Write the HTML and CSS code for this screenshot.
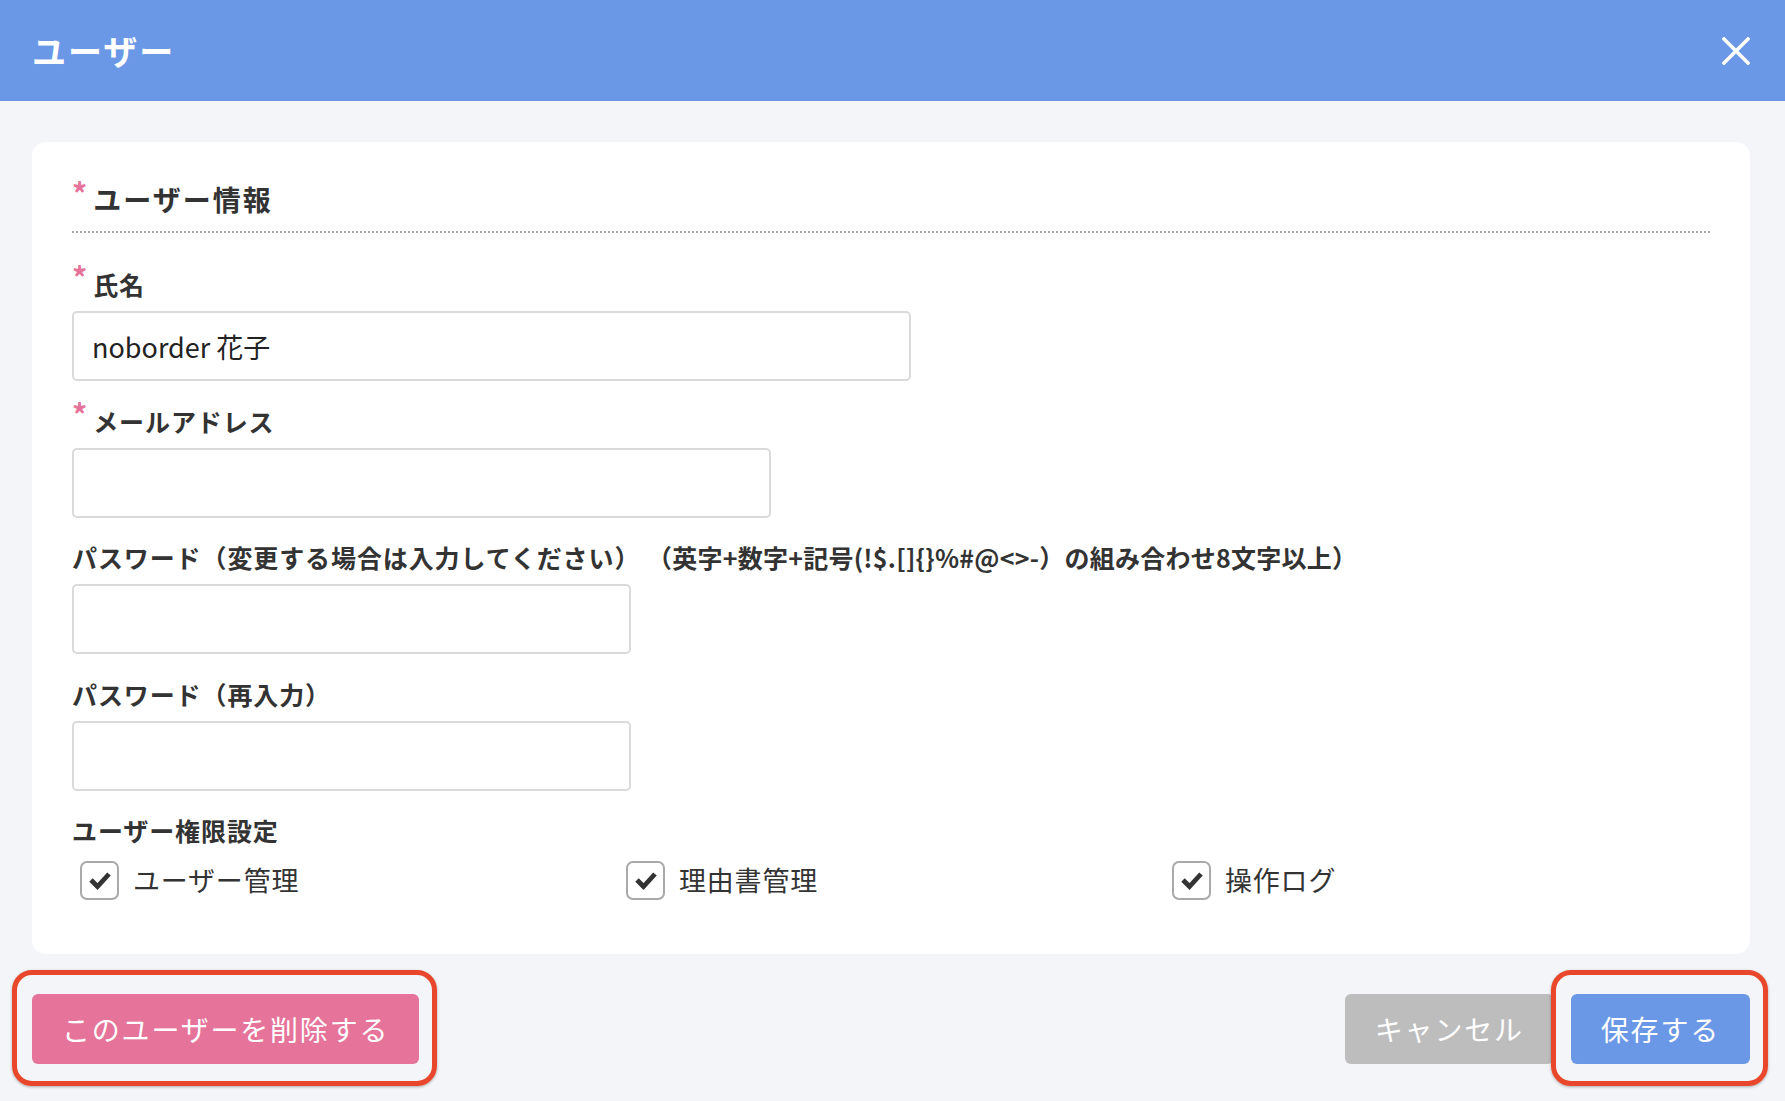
FILE: index.html
```html
<!DOCTYPE html>
<html lang="ja">
<head>
    <meta charset="UTF-8">
    <meta name="viewport" content="width=device-width, initial-scale=1.0">
    <title>ユーザー</title>
    <link rel="stylesheet" href="styles.css">
</head>
<body>
    <header class="modal-header">
        <h1 class="modal-title">ユーザー</h1>
        <button class="close-btn" aria-label="閉じる">
            <svg width="28" height="28" viewBox="0 0 28 28">
                <path d="M2 2 L26 26 M26 2 L2 26" stroke="#fff" stroke-width="3.5" stroke-linecap="square" fill="none"/>
            </svg>
        </button>
    </header>

    <main class="modal-body">
        <section class="card">
            <h2 class="section-title"><span class="req">*</span>ユーザー情報</h2>

            <div class="field first">
                <label class="field-label"><span class="req">*</span>氏名</label>
                <input class="text-input w-lg" type="text" value="noborder 花子">
            </div>

            <div class="field">
                <label class="field-label"><span class="req">*</span>メールアドレス</label>
                <input class="text-input w-md" type="text">
            </div>

            <div class="field">
                <label class="field-label">パスワード（変更する場合は入力してください） <span class="hint">（英字+数字+記号(!$.[]{}%#@&lt;&gt;-）の組み合わせ8文字以上）</span></label>
                <input class="text-input w-sm" type="password">
            </div>

            <div class="field">
                <label class="field-label">パスワード（再入力）</label>
                <input class="text-input w-sm" type="password">
            </div>

            <div class="field">
                <div class="field-label">ユーザー権限設定</div>
                <div class="perm-grid">
                    <label class="perm-item">
                        <span class="check-box">
                            <svg width="26" height="26" viewBox="0 0 26 26"><path d="M4 13 L10.5 19.5 L22 7" stroke="#333" stroke-width="4.8" fill="none"/></svg>
                        </span>
                        ユーザー管理
                    </label>
                    <label class="perm-item">
                        <span class="check-box">
                            <svg width="26" height="26" viewBox="0 0 26 26"><path d="M4 13 L10.5 19.5 L22 7" stroke="#333" stroke-width="4.8" fill="none"/></svg>
                        </span>
                        理由書管理
                    </label>
                    <label class="perm-item">
                        <span class="check-box">
                            <svg width="26" height="26" viewBox="0 0 26 26"><path d="M4 13 L10.5 19.5 L22 7" stroke="#333" stroke-width="4.8" fill="none"/></svg>
                        </span>
                        操作ログ
                    </label>
                </div>
            </div>
        </section>

        <div class="actions">
            <button class="btn btn-delete marked">このユーザーを削除する</button>
            <div class="actions-right">
                <button class="btn btn-cancel">キャンセル</button>
                <button class="btn btn-save marked">保存する</button>
            </div>
        </div>
    </main>
</body>
</html>
```

FILE: styles.css
```css
* {
    box-sizing: border-box;
    font-family: "Noto Sans CJK JP", "Noto Sans", sans-serif;
}

body {
    margin: 0;
    background-color: #f4f5f9;
    color: #333;
}

.modal-header {
    height: 101px;
    background-color: #6a97e6;
    display: flex;
    justify-content: space-between;
    align-items: center;
    padding: 0 35px 0 32px;
}

.modal-title {
    margin: 0;
    color: #fff;
    font-size: 34px;
    font-weight: bold;
    letter-spacing: 2px;
    line-height: 1;
}

.close-btn {
    background: none;
    border: none;
    padding: 0;
    width: 28px;
    height: 28px;
    cursor: pointer;
    display: flex;
}

.modal-body {
    padding: 41px 35px 32px 32px;
}

.card {
    background-color: #fff;
    border-radius: 14px;
    padding: 37px 40px 54px 40px;
}

.section-title {
    margin: 0;
    font-size: 28px;
    font-weight: bold;
    letter-spacing: 2px;
    line-height: 40px;
    padding-bottom: 12px;
    border-bottom: 2px dotted #a5a5a5;
}

.req {
    color: #e5739a;
    font-size: 30px;
    font-weight: bold;
    line-height: 0;
    vertical-align: 6px;
    margin-right: 6px;
    letter-spacing: 0;
}

.field {
    margin-top: 21.5px;
}

.field.first {
    margin-top: 33px;
}

.field-label {
    display: block;
    font-size: 25px;
    font-weight: bold;
    letter-spacing: 0.9px;
    line-height: 36px;
    margin-bottom: 9px;
}

.hint {
    letter-spacing: 0.25px;
}

.text-input {
    display: block;
    height: 70px;
    border: 2px solid #dadada;
    border-radius: 5px;
    padding: 0 18px;
    font-size: 27px;
    color: #222;
    background: #fff;
    outline: none;
}

.w-lg { width: 839px; }
.w-md { width: 699px; }
.w-sm { width: 559px; }

.perm-grid {
    display: grid;
    grid-template-columns: repeat(3, 1fr);
    margin-top: 12px;
}

.perm-item {
    display: flex;
    align-items: center;
    gap: 14px;
    padding-left: 8px;
    font-size: 27px;
    letter-spacing: 0.8px;
    line-height: 40px;
}

.check-box {
    width: 39px;
    height: 39px;
    border: 2px solid #a9a9a9;
    border-radius: 7px;
    display: flex;
    align-items: center;
    justify-content: center;
}

.actions {
    display: flex;
    justify-content: space-between;
    margin-top: 40px;
}

.actions-right {
    display: flex;
    gap: 17px;
}

.btn {
    position: relative;
    height: 70px;
    border: none;
    border-radius: 6px;
    padding: 0 30px;
    color: #fff;
    font-size: 28px;
    letter-spacing: 1.8px;
    cursor: pointer;
}

.btn-delete {
    background-color: #e5739a;
}

.btn-cancel {
    background-color: #bdbdbd;
}

.btn-save {
    background-color: #6a97e6;
}

/* red annotation rings */
.marked::after {
    content: "";
    position: absolute;
    top: -24px;
    bottom: -22px;
    left: -20px;
    right: -18px;
    border: 5px solid #e8472b;
    border-radius: 20px;
    box-shadow: 0 1px 3px rgba(0, 0, 0, 0.3);
    pointer-events: none;
}
```
